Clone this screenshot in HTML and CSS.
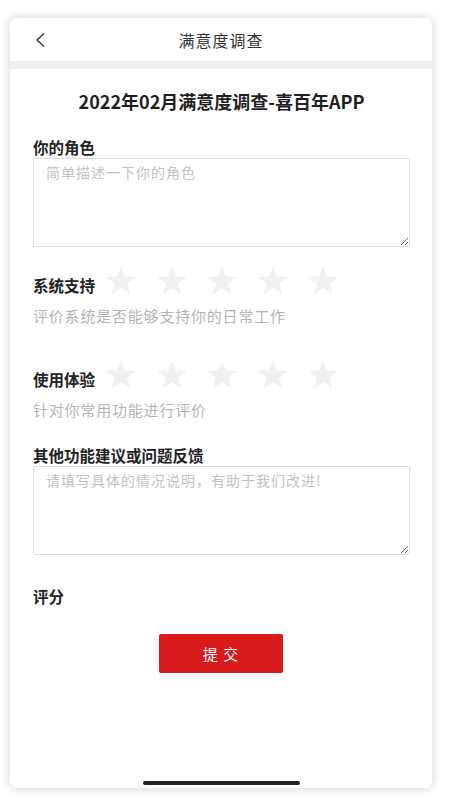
FILE: index.html
```html
<!DOCTYPE html>
<html lang="zh-CN">
<head>
<meta charset="utf-8">
<title>满意度调查</title>
<link rel="stylesheet" href="styles.css">
</head>
<body>
<div class="phone">
  <header class="nav">
    <span class="back">
      <svg width="10" height="14" viewBox="0 0 10 14"><path d="M8.5 1 L2 7 L8.5 13" fill="none" stroke="#333" stroke-width="1.4" stroke-linecap="round" stroke-linejoin="round"/></svg>
    </span>
    <h1 class="nav-title">满意度调查</h1>
    <span class="nav-spacer"></span>
  </header>
  <div class="band"></div>
  <main class="content">
    <h2 class="survey-title">2022年02月满意度调查-喜百年APP</h2>

    <div class="label label-first">你的角色</div>
    <textarea class="field" placeholder="简单描述一下你的角色"></textarea>

    <div class="rate-row rate-first">
      <span class="label-inline">系统支持</span>
      <div class="stars">
        <svg class="star" viewBox="0 0 32 30"><path d="M16 0.5 L19.8 10.6 L31.2 10.9 L22.2 17.6 L25.4 28.6 L16 22.2 L6.6 28.6 L9.8 17.6 L0.8 10.9 L12.2 10.6 Z"/></svg>
        <svg class="star" viewBox="0 0 32 30"><path d="M16 0.5 L19.8 10.6 L31.2 10.9 L22.2 17.6 L25.4 28.6 L16 22.2 L6.6 28.6 L9.8 17.6 L0.8 10.9 L12.2 10.6 Z"/></svg>
        <svg class="star" viewBox="0 0 32 30"><path d="M16 0.5 L19.8 10.6 L31.2 10.9 L22.2 17.6 L25.4 28.6 L16 22.2 L6.6 28.6 L9.8 17.6 L0.8 10.9 L12.2 10.6 Z"/></svg>
        <svg class="star" viewBox="0 0 32 30"><path d="M16 0.5 L19.8 10.6 L31.2 10.9 L22.2 17.6 L25.4 28.6 L16 22.2 L6.6 28.6 L9.8 17.6 L0.8 10.9 L12.2 10.6 Z"/></svg>
        <svg class="star" viewBox="0 0 32 30"><path d="M16 0.5 L19.8 10.6 L31.2 10.9 L22.2 17.6 L25.4 28.6 L16 22.2 L6.6 28.6 L9.8 17.6 L0.8 10.9 L12.2 10.6 Z"/></svg>
      </div>
    </div>
    <p class="desc desc-first">评价系统是否能够支持你的日常工作</p>

    <div class="rate-row rate-second">
      <span class="label-inline">使用体验</span>
      <div class="stars">
        <svg class="star" viewBox="0 0 32 30"><path d="M16 0.5 L19.8 10.6 L31.2 10.9 L22.2 17.6 L25.4 28.6 L16 22.2 L6.6 28.6 L9.8 17.6 L0.8 10.9 L12.2 10.6 Z"/></svg>
        <svg class="star" viewBox="0 0 32 30"><path d="M16 0.5 L19.8 10.6 L31.2 10.9 L22.2 17.6 L25.4 28.6 L16 22.2 L6.6 28.6 L9.8 17.6 L0.8 10.9 L12.2 10.6 Z"/></svg>
        <svg class="star" viewBox="0 0 32 30"><path d="M16 0.5 L19.8 10.6 L31.2 10.9 L22.2 17.6 L25.4 28.6 L16 22.2 L6.6 28.6 L9.8 17.6 L0.8 10.9 L12.2 10.6 Z"/></svg>
        <svg class="star" viewBox="0 0 32 30"><path d="M16 0.5 L19.8 10.6 L31.2 10.9 L22.2 17.6 L25.4 28.6 L16 22.2 L6.6 28.6 L9.8 17.6 L0.8 10.9 L12.2 10.6 Z"/></svg>
        <svg class="star" viewBox="0 0 32 30"><path d="M16 0.5 L19.8 10.6 L31.2 10.9 L22.2 17.6 L25.4 28.6 L16 22.2 L6.6 28.6 L9.8 17.6 L0.8 10.9 L12.2 10.6 Z"/></svg>
      </div>
    </div>
    <p class="desc desc-second">针对你常用功能进行评价</p>

    <div class="label label-feedback">其他功能建议或问题反馈</div>
    <textarea class="field" placeholder="请填写具体的情况说明，有助于我们改进!"></textarea>

    <div class="label label-score">评分</div>
    <button class="submit" type="button">提 交</button>
  </main>
  <div class="home-indicator"></div>
</div>
</body>
</html>
```

FILE: styles.css
```css
* { box-sizing: border-box; }

html, body {
  margin: 0;
  padding: 0;
  background: #ffffff;
}

body {
  width: 450px;
  height: 800px;
  padding: 18px 0 0 10px;
  font-family: "Noto Sans CJK SC", "Noto Sans", "Liberation Sans", sans-serif;
  color: #222;
  overflow: hidden;
}

.phone {
  width: 422px;
  height: 770px;
  background: #fff;
  border-radius: 7px;
  box-shadow: 0 0 9px 2px rgba(0, 0, 0, 0.13);
  display: flex;
  flex-direction: column;
  overflow: hidden;
}

.nav {
  height: 43px;
  display: grid;
  grid-template-columns: 60px 1fr 60px;
  align-items: center;
}

.back {
  display: flex;
  align-items: center;
  padding-left: 25px;
  padding-top: 0;
}

.back svg { display: block; }

.nav-title {
  margin: 0;
  text-align: center;
  font-size: 16px;
  font-weight: 400;
  letter-spacing: 1px;
  color: #333;
  line-height: 22px;
}

.band {
  height: 8px;
  background: #eeeeee;
}

.content {
  padding: 0 22px 0 23px;
  display: flex;
  flex-direction: column;
}

.survey-title {
  margin: 20px 0 0;
  text-align: center;
  font-size: 18px;
  font-weight: 700;
  line-height: 24px;
  color: #1f1f1f;
}

.label {
  font-size: 15.5px;
  font-weight: 700;
  line-height: 22px;
  color: #222;
}

.label-first { margin-top: 23px; }
.label-feedback { margin-top: 23px; }
.label-score { margin-top: 30px; }

.field {
  display: block;
  width: 377px;
  height: 89px;
  margin: 0;
  border: 1px solid #dcdcdc;
  border-radius: 2px;
  padding: 3px 12px;
  font-family: "Noto Sans CJK SC", "Noto Sans", sans-serif;
  font-size: 14px;
  letter-spacing: 1px;
  line-height: 20px;
  color: #333;
  background: #fff;
  outline: none;
}

.field::placeholder {
  color: #c2c2c2;
}

.rate-row {
  display: flex;
  align-items: center;
  height: 32px;
}

.rate-first { margin-top: 18px; }
.rate-second { margin-top: 32px; }

.label-inline {
  font-size: 15.5px;
  font-weight: 700;
  line-height: 22px;
  margin-top: 7px;
  color: #222;
}

.stars {
  display: flex;
  gap: 18.5px;
  margin-left: 10px;
}

.star {
  width: 32px;
  height: 30px;
  display: block;
  fill: #f0f0f0;
}

.desc {
  margin: 0;
  font-size: 15px;
  letter-spacing: 0.8px;
  line-height: 22px;
  color: #b4b4b4;
}

.desc-first { margin-top: 8px; }
.desc-second { margin-top: 8px; }

.submit {
  align-self: center;
  margin: 27px 0 0 -1px;
  width: 124px;
  height: 39px;
  border: none;
  border-radius: 2px;
  background: #d81c1c;
  color: #fff;
  font-family: "Noto Sans CJK SC", "Noto Sans", sans-serif;
  font-size: 15px;
  letter-spacing: 1px;
  padding: 0;
}

.home-indicator {
  margin: auto auto 3px;
  width: 157px;
  height: 4px;
  border-radius: 2px;
  background: #222;
}
```
